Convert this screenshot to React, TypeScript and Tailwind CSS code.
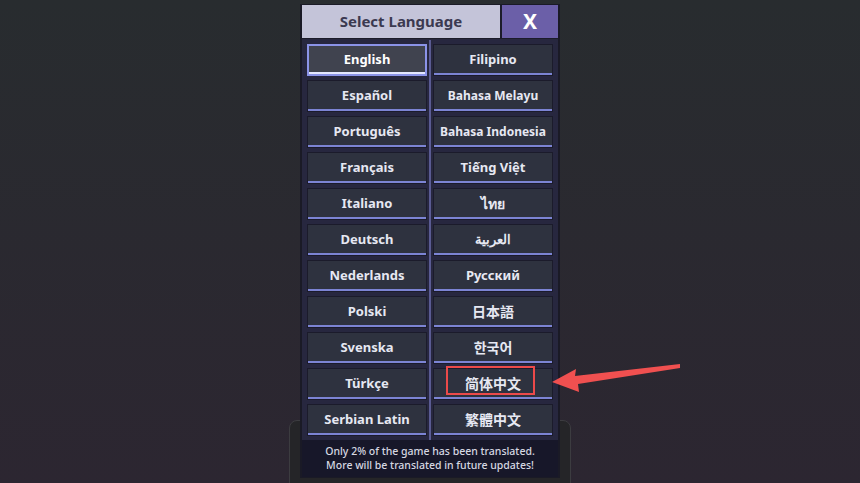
import type { FC } from "react";

interface Lang {
  label: string;
  size?: string;
}

const left: Lang[] = [
  { label: "English" },
  { label: "Español" },
  { label: "Português" },
  { label: "Français" },
  { label: "Italiano" },
  { label: "Deutsch" },
  { label: "Nederlands" },
  { label: "Polski" },
  { label: "Svenska" },
  { label: "Türkçe" },
  { label: "Serbian Latin" },
];

const right: Lang[] = [
  { label: "Filipino" },
  { label: "Bahasa Melayu", size: "text-[12px]" },
  { label: "Bahasa Indonesia", size: "text-[12px]" },
  { label: "Tiếng Việt" },
  { label: "ไทย", size: "text-[14px]" },
  { label: "العربية" },
  { label: "Русский", size: "text-[13px]" },
  { label: "日本語", size: "text-[14px]" },
  { label: "한국어", size: "text-[14px]" },
  { label: "简体中文", size: "text-[14px]" },
  { label: "繁體中文", size: "text-[14px]" },
];

const LangButton: FC<{ lang: Lang; selected?: boolean }> = ({ lang, selected }) => (
  <button
    className={
      selected
        ? "relative h-[32px] w-full border-2 border-[#8b93e8] bg-[#40434f] text-white"
        : "relative h-[32px] w-full border border-[#1b1b2b] bg-[#2e323f] text-[#e6e8f2]"
    }
  >
    <span
      className={`flex h-full items-center justify-center pb-[1px] font-bold leading-none ${lang.size ?? "text-[13px]"}`}
    >
      {lang.label}
    </span>
    <span
      className={
        selected
          ? "absolute bottom-0 left-0 right-0 h-[2px] bg-[#e4e7ff]"
          : "absolute bottom-0 left-0 right-0 h-[2px] bg-[#7c84d4]"
      }
    />
  </button>
);

export default function App() {
  return (
    <div
      className="relative flex h-[483px] w-[860px] justify-center overflow-hidden bg-gradient-to-b from-[#282c2f] to-[#2c2631] pt-[4px]"
      style={{ fontFamily: "'Noto Sans', 'Noto Sans CJK SC', sans-serif" }}
    >
      {/* Options panel peeking out behind the dialog */}
      <div className="absolute left-[289px] top-[420px] h-[80px] w-[282px] rounded-[8px] border border-[#3c3c40] bg-[#252528]" />

      <div className="relative z-10 flex h-[474px] w-[260px] flex-col border-x-2 border-y border-[#1a1a26] bg-[#1c1c2a]">
        {/* Title bar */}
        <div className="flex h-[33px] gap-[2px]">
          <div className="flex flex-1 items-center justify-center bg-[#c4c4d9] text-[15px] font-bold text-[#3b3950]">
            Select Language
          </div>
          <button className="flex w-[56px] items-center justify-center bg-[#6b5fa8] text-[21px] font-bold text-white">
            X
          </button>
        </div>

        {/* Language grid */}
        <div className="mt-[1px] flex-1 bg-[#27273f] px-[5px] pt-[5px]">
          <div className="grid grid-cols-[120px_2px_120px] gap-x-[2px]">
            <div className="flex flex-col gap-[4px]">
              {left.map((l, i) => (
                <LangButton key={l.label} lang={l} selected={i === 0} />
              ))}
            </div>
            <div className="-mt-[4px] h-[400px] bg-[#5a5b92]" />
            <div className="flex flex-col gap-[4px]">
              {right.map((l) => (
                <LangButton key={l.label} lang={l} />
              ))}
            </div>
          </div>
        </div>

        {/* Footer note */}
        <div className="flex h-[37px] flex-col items-center justify-center bg-[#171729] pb-[2px] text-[10.5px] font-medium leading-[14px] text-[#d6d7e2]">
          <p>Only 2% of the game has been translated.</p>
          <p>More will be translated in future updates!</p>
        </div>
      </div>

      {/* Annotation: red box + arrow */}
      <div className="absolute left-[446px] top-[366px] z-20 h-[29px] w-[89px] border-2 border-[#ec4a4a]" />
      <svg className="absolute left-0 top-0 z-20" width="860" height="483" viewBox="0 0 860 483">
        <polygon
          points="552,382 576,369 575,376 680,364 680,368 578,384 579,392"
          fill="#f05050"
        />
      </svg>
    </div>
  );
}
